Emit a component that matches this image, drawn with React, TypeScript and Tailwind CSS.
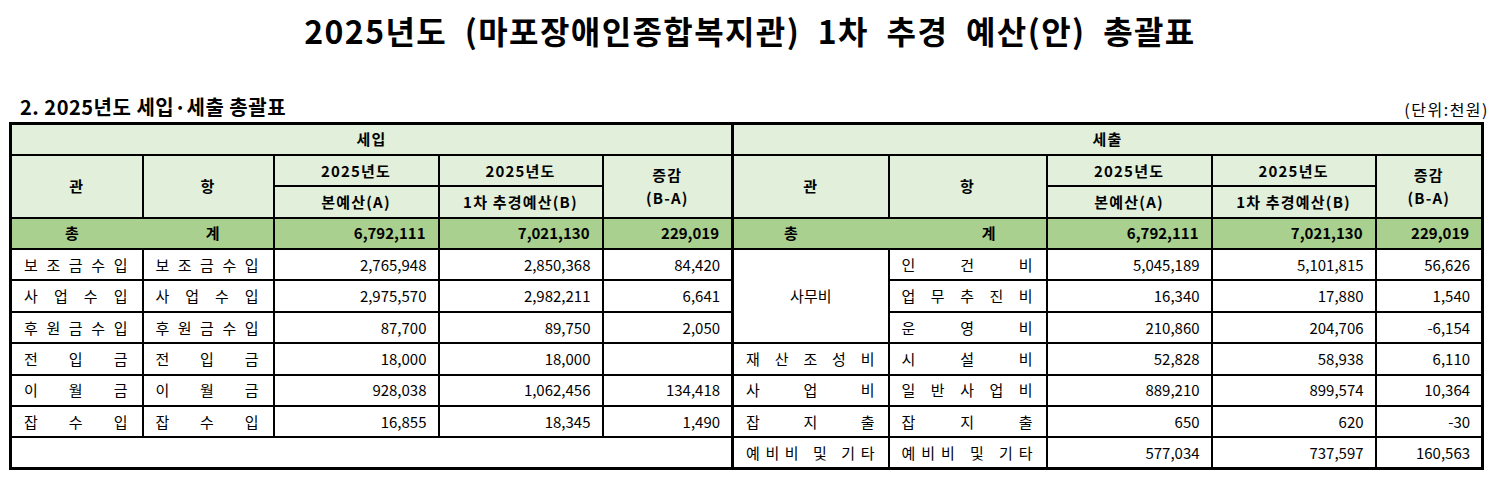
import React from 'react';

const spread = (s: string) => (
  <div className="flex justify-between">
    {s.split('').map((c, i) => (
      <span key={i} className="whitespace-pre">{c}</span>
    ))}
  </div>
);

const leftRows = [
  ['보조금수입', '보조금수입', '2,765,948', '2,850,368', '84,420'],
  ['사업수입', '사업수입', '2,975,570', '2,982,211', '6,641'],
  ['후원금수입', '후원금수입', '87,700', '89,750', '2,050'],
  ['전입금', '전입금', '18,000', '18,000', ''],
  ['이월금', '이월금', '928,038', '1,062,456', '134,418'],
  ['잡수입', '잡수입', '16,855', '18,345', '1,490'],
];

const rightRows = [
  ['사무비', '인건비', '5,045,189', '5,101,815', '56,626'],
  ['', '업무추진비', '16,340', '17,880', '1,540'],
  ['', '운영비', '210,860', '204,706', '-6,154'],
  ['재산조성비', '시설비', '52,828', '58,938', '6,110'],
  ['사업비', '일반사업비', '889,210', '899,574', '10,364'],
  ['잡지출', '잡지출', '650', '620', '-30'],
  ['예비비 및 기타', '예비비 및 기타', '577,034', '737,597', '160,563'],
];

export default function App() {
  const td = 'border-2 border-black h-[31.4px] p-0';
  const hd = `${td} bg-[#e2efda] font-bold text-center tracking-[1.2px]`;
  const tot = `${td} bg-[#a9d08e] font-bold`;
  const num = `${td} text-right pr-[11px]`;
  const txtL = `${td} pl-[12px] pr-[14px]`;
  const txtR = `${td} pl-[12px] pr-[13px]`;
  return (
    <div className="w-[1500px] h-[483px] bg-white text-black font-['Noto_Sans_CJK_KR',sans-serif] px-[9px]">
      <div className="h-[70px] pb-[10px] flex items-center justify-center text-[32px] font-bold tracking-[1.4px] [word-spacing:9px]">
        2025년도 (마포장애인종합복지관) 1차 추경 예산(안) 총괄표
      </div>
      <div className="h-[52px] flex items-end justify-between pl-[11px] pr-[2px] pb-[3px]">
        <div className="text-[20px] font-bold leading-[24px] tracking-[0.5px]">2. 2025년도 세입·세출 총괄표</div>
        <div className="text-[16px] leading-[20px] tracking-[1.5px]">(단위:천원)</div>
      </div>
      <table className="table-fixed border-collapse border-[3px] border-black text-[15px] leading-[20px] w-[1475px]">
        <colgroup>
          <col className="w-[132px]" />
          <col className="w-[131px]" />
          <col className="w-[165px]" />
          <col className="w-[164px]" />
          <col className="w-[130px]" />
          <col className="w-[156px]" />
          <col className="w-[158px]" />
          <col className="w-[165px]" />
          <col className="w-[164px]" />
          <col className="w-[107px]" />
        </colgroup>
        <thead>
          <tr>
            <th colSpan={5} className={`${hd} border-r-[3px]`}>세입</th>
            <th colSpan={5} className={hd}>세출</th>
          </tr>
          <tr>
            <th rowSpan={2} className={hd}>관</th>
            <th rowSpan={2} className={hd}>항</th>
            <th className={hd}>2025년도</th>
            <th className={hd}>2025년도</th>
            <th rowSpan={2} className={`${hd} border-r-[3px]`}>
              <div className="leading-[23px]">증감<br />(B-A)</div>
            </th>
            <th rowSpan={2} className={hd}>관</th>
            <th rowSpan={2} className={hd}>항</th>
            <th className={hd}>2025년도</th>
            <th className={hd}>2025년도</th>
            <th rowSpan={2} className={hd}>
              <div className="leading-[23px]">증감<br />(B-A)</div>
            </th>
          </tr>
          <tr>
            <th className={hd}>본예산(A)</th>
            <th className={hd}>1차 추경예산(B)</th>
            <th className={hd}>본예산(A)</th>
            <th className={hd}>1차 추경예산(B)</th>
          </tr>
          <tr>
            <td colSpan={2} className={`${tot} px-[53px]`}>{spread('총계')}</td>
            <td className={`${tot} text-right pr-[12px]`}>6,792,111</td>
            <td className={`${tot} text-right pr-[12px]`}>7,021,130</td>
            <td className={`${tot} text-right pr-[12px] border-r-[3px]`}>229,019</td>
            <td colSpan={2} className={`${tot} px-[50px]`}>{spread('총계')}</td>
            <td className={`${tot} text-right pr-[12px]`}>6,792,111</td>
            <td className={`${tot} text-right pr-[12px]`}>7,021,130</td>
            <td className={`${tot} text-right pr-[12px]`}>229,019</td>
          </tr>
        </thead>
        <tbody>
          {rightRows.map((r, i) => {
            const l = leftRows[i];
            return (
              <tr key={i}>
                {l ? (
                  <>
                    <td className={txtL}>{spread(l[0])}</td>
                    <td className={txtL}>{spread(l[1])}</td>
                    <td className={num}>{l[2]}</td>
                    <td className={num}>{l[3]}</td>
                    <td className={`${num} border-r-[3px]`}>{l[4]}</td>
                  </>
                ) : (
                  <td colSpan={5} className={`${td} border-r-[3px]`}></td>
                )}
                {i === 0 && (
                  <td rowSpan={3} className={`${td} text-center`}>사무비</td>
                )}
                {i > 2 && <td className={`${txtR} pl-[10px] pr-[12px]`}>{spread(r[0])}</td>}
                <td className={txtR}>{spread(r[1])}</td>
                <td className={num}>{r[2]}</td>
                <td className={num}>{r[3]}</td>
                <td className={num}>{r[4]}</td>
              </tr>
            );
          })}
        </tbody>
      </table>
    </div>
  );
}
